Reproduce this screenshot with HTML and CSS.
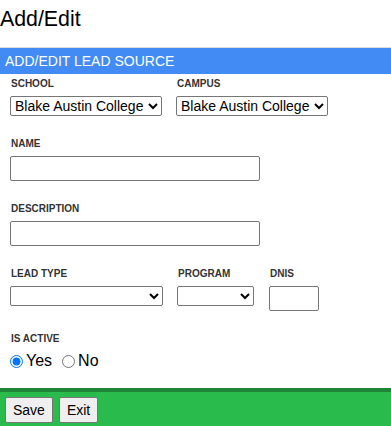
FILE: index.html
```html
<!DOCTYPE html>
<html lang="en">
<head>
    <meta charset="UTF-8">
    <meta name="viewport" content="width=device-width, initial-scale=1.0">
    <title>Add/Edit Lead Source</title>
    <link rel="stylesheet" href="styles.css">
</head>
<body>
    <h1 class="page-title">Add/Edit</h1>
    <div class="panel">
        <div class="panel-head">ADD/EDIT LEAD SOURCE</div>
        <form class="panel-body" autocomplete="off">
            <div class="form-row">
                <div class="field">
                    <label for="school">School</label>
                    <select id="school" class="select-wide">
                        <option>Blake Austin College</option>
                    </select>
                </div>
                <div class="field">
                    <label for="campus">Campus</label>
                    <select id="campus" class="select-wide">
                        <option>Blake Austin College</option>
                    </select>
                </div>
            </div>
            <div class="form-row">
                <div class="field">
                    <label for="name">Name</label>
                    <input type="text" id="name" class="text-input">
                </div>
            </div>
            <div class="form-row">
                <div class="field">
                    <label for="description">Description</label>
                    <input type="text" id="description" class="text-input">
                </div>
            </div>
            <div class="form-row">
                <div class="field">
                    <label for="leadType">Lead Type</label>
                    <select id="leadType" class="select-lead"><option></option></select>
                </div>
                <div class="field">
                    <label for="program">Program</label>
                    <select id="program" class="select-program"><option></option></select>
                </div>
                <div class="field field-dnis">
                    <label for="dnis">DNIS</label>
                    <input type="text" id="dnis" class="text-input dnis-input">
                </div>
            </div>
            <div class="field">
                <label>Is Active</label>
                <div class="radio-row">
                    <label class="radio-option"><input type="radio" name="active" checked>Yes</label>
                    <label class="radio-option"><input type="radio" name="active">No</label>
                </div>
            </div>
        </form>
        <div class="actions">
            <button type="button" class="btn">Save</button>
            <button type="button" class="btn">Exit</button>
        </div>
    </div>
</body>
</html>
```

FILE: styles.css
```css
:root {
    --head-blue: #428bf5;
    --foot-green: #29bb4c;
    --foot-dark: #1e8436;
    --control-border: #767676;
    --label-color: #333;
}
* { box-sizing: border-box; }
body {
    margin: 0;
    background: #fff;
    color: #000;
    font-family: 'Liberation Sans', Arial, sans-serif;
}
.page-title {
    margin: 7px 0 15px 0;
    font-size: 21.33px;
    font-weight: 400;
    line-height: 25px;
}
.panel {
    border-top: 1px solid #dcdcdc;
}
.panel-head {
    background: var(--head-blue);
    color: #fff;
    font-size: 14px;
    line-height: 25px;
    height: 26px;
    padding: 1px 0 0 5px;
}
.panel-body {
    padding: 4px 10px 18px 10px;
    margin: 0;
}
.form-row {
    display: flex;
    gap: 14px;
    margin-bottom: 22px;
}
.field label {
    display: block;
    color: var(--label-color);
    font-size: 10px;
    font-weight: 700;
    text-transform: uppercase;
    line-height: 12px;
    margin-bottom: 6px;
    padding-left: 1px;
}
.field-dnis {
    margin-left: 1px;
}
select {
    height: 20px;
    font-family: 'Liberation Sans', Arial, sans-serif;
    font-size: 14px;
    color: #000;
    border: 1px solid var(--control-border);
    border-radius: 2px;
    background: #fff;
    display: block;
}
.select-wide { width: 152px; }
.select-lead { width: 153px; }
.select-program { width: 77px; }
.text-input {
    display: block;
    width: 250px;
    height: 25px;
    border: 1px solid var(--control-border);
    border-radius: 2px;
    font-family: 'Liberation Sans', Arial, sans-serif;
    font-size: 14px;
    padding: 2px 4px;
}
.dnis-input {
    width: 50px;
}
.field .radio-row {
    display: flex;
    align-items: center;
    margin-top: 7px;
    height: 18px;
}
.field .radio-option {
    display: flex;
    align-items: center;
    padding: 0;
    margin: 0 10px 0 0;
    font-size: 16px;
    font-weight: 400;
    text-transform: none;
    color: #000;
    line-height: 18px;
}
.radio-option input {
    width: 13px;
    height: 13px;
    margin: 0 3px 0 0;
}
.actions {
    background: var(--foot-green);
    border-top: 4px solid var(--foot-dark);
    padding: 5px 5px 3px 5px;
    display: flex;
    gap: 6px;
}
.btn {
    height: 26px;
    padding: 0 7px;
    font-family: 'Liberation Sans', Arial, sans-serif;
    font-size: 14px;
    color: #000;
    background: #efefef;
    border: 1px solid var(--control-border);
    border-radius: 2px;
}
```
